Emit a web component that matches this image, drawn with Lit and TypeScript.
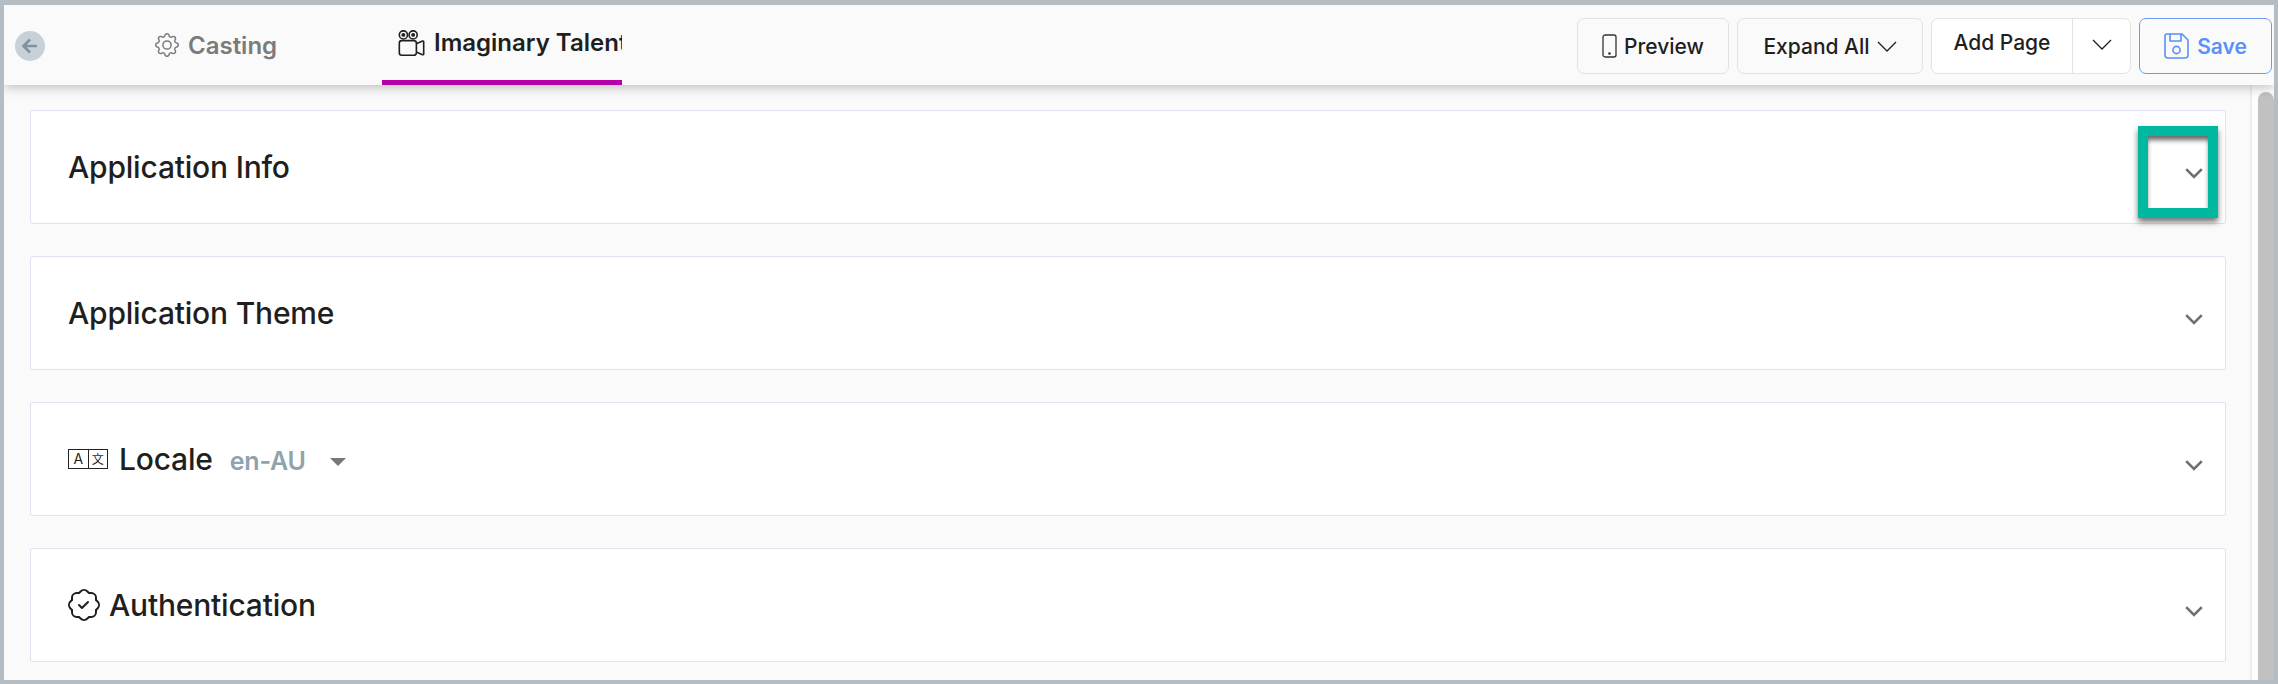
import { LitElement, html, css, svg } from 'lit';
import { customElement } from 'lit/decorators.js';

const gear = svg`<path d="M8 4.754a3.246 3.246 0 1 0 0 6.492 3.246 3.246 0 0 0 0-6.492zM5.754 8a2.246 2.246 0 1 1 4.492 0 2.246 2.246 0 0 1-4.492 0z"/><path d="M9.796 1.343c-.527-1.79-3.065-1.79-3.592 0l-.094.319a.873.873 0 0 1-1.255.52l-.292-.16c-1.64-.892-3.433.902-2.54 2.541l.159.292a.873.873 0 0 1-.52 1.255l-.319.094c-1.79.527-1.79 3.065 0 3.592l.319.094a.873.873 0 0 1 .52 1.255l-.16.292c-.892 1.64.901 3.434 2.541 2.54l.292-.159a.873.873 0 0 1 1.255.52l.094.319c.527 1.79 3.065 1.79 3.592 0l.094-.319a.873.873 0 0 1 1.255-.52l.292.16c1.64.893 3.434-.902 2.54-2.541l-.159-.292a.873.873 0 0 1 .52-1.255l.319-.094c1.79-.527 1.79-3.065 0-3.592l-.319-.094a.873.873 0 0 1-.52-1.255l.16-.292c.893-1.64-.902-3.433-2.541-2.54l-.292.159a.873.873 0 0 1-1.255-.52l-.094-.319zm-2.633.283c.246-.835 1.428-.835 1.674 0l.094.319a1.873 1.873 0 0 0 2.693 1.115l.291-.16c.764-.415 1.6.42 1.184 1.185l-.159.292a1.873 1.873 0 0 0 1.116 2.692l.318.094c.835.246.835 1.428 0 1.674l-.319.094a1.873 1.873 0 0 0-1.115 2.693l.16.291c.415.764-.42 1.6-1.185 1.184l-.291-.159a1.873 1.873 0 0 0-2.693 1.116l-.094.318c-.246.835-1.428.835-1.674 0l-.094-.319a1.873 1.873 0 0 0-2.692-1.115l-.292.16c-.764.415-1.6-.42-1.184-1.185l.159-.291A1.873 1.873 0 0 0 1.945 8.93l-.319-.094c-.835-.246-.835-1.428 0-1.674l.319-.094A1.873 1.873 0 0 0 3.06 4.377l-.16-.292c-.415-.764.42-1.6 1.185-1.184l.292.159a1.873 1.873 0 0 0 2.692-1.115l.094-.319z"/>`;

const reels = svg`<path d="M6 3a3 3 0 1 1-6 0 3 3 0 0 1 6 0zM1 3a2 2 0 1 0 4 0 2 2 0 0 0-4 0z"/><path d="M9 6h.5a2 2 0 0 1 1.983 1.738l3.11-1.382A1 1 0 0 1 16 7.269v7.462a1 1 0 0 1-1.406.913l-3.111-1.382A2 2 0 0 1 9.5 16H2a2 2 0 0 1-2-2V8a2 2 0 0 1 2-2h7zm6 8.73V7.27l-3.5 1.555v4.35l3.5 1.556zM1 8v6a1 1 0 0 0 1 1h7.5a1 1 0 0 0 1-1V8a1 1 0 0 0-1-1H2a1 1 0 0 0-1 1z"/><path d="M9 6a3 3 0 1 0 0-6 3 3 0 0 0 0 6zM7 3a2 2 0 1 1 4 0 2 2 0 0 1-4 0z"/><circle cx="3" cy="3" r="1.2"/><circle cx="9" cy="3" r="1.2"/>`;

const patch = svg`<path fill-rule="evenodd" d="M10.354 6.146a.5.5 0 0 1 0 .708l-3 3a.5.5 0 0 1-.708 0l-1.5-1.5a.5.5 0 1 1 .708-.708L7 8.793l2.646-2.647a.5.5 0 0 1 .708 0z"/><path d="m10.273 2.513-.921-.944.715-.698.622.637.89-.011a2.89 2.89 0 0 1 2.924 2.924l-.01.89.636.622a2.89 2.89 0 0 1 0 4.134l-.637.622.011.89a2.89 2.89 0 0 1-2.924 2.924l-.89-.01-.622.636a2.89 2.89 0 0 1-4.134 0l-.622-.637-.89.011a2.89 2.89 0 0 1-2.924-2.924l.01-.89-.636-.622a2.89 2.89 0 0 1 0-4.134l.637-.622-.011-.89a2.89 2.89 0 0 1 2.924-2.924l.89.01.622-.636a2.89 2.89 0 0 1 4.134 0l-.715.698a1.89 1.89 0 0 0-2.704 0l-.92.944-1.32-.016a1.89 1.89 0 0 0-1.911 1.912l.016 1.318-.944.921a1.89 1.89 0 0 0 0 2.704l.944.92-.016 1.32a1.89 1.89 0 0 0 1.912 1.911l1.318-.016.921.944a1.89 1.89 0 0 0 2.704 0l.92-.944 1.32.016a1.89 1.89 0 0 0 1.911-1.912l-.016-1.318.944-.921a1.89 1.89 0 0 0 0-2.704l-.944-.92.016-1.32a1.89 1.89 0 0 0-1.912-1.911l-1.318.016z"/>`;

const thinChevron = html`<svg class="thin" viewBox="0 0 20 11" fill="none" stroke="currentColor" stroke-width="1.3"><path d="M1 1l9 9 9-9"/></svg>`;
const cardChevron = html`<svg class="chev" viewBox="0 0 18 11" fill="none" stroke="#6f6f6f" stroke-width="2.6"><path d="M1.2 1.2L9 9l7.8-7.8"/></svg>`;

@customElement('app-root')
export class AppRoot extends LitElement {
  static styles = css`
    :host {
      display: block;
      width: 2278px;
      height: 684px;
      box-sizing: border-box;
      border: 4px solid #b4bdc4;
      border-top-width: 5px;
      background: #fafafa;
      font-family: Inter, "Liberation Sans", sans-serif;
      color: #1f1f1f;
      overflow: hidden;
    }
    svg { display: block; flex: none; }
    .top {
      position: relative;
      z-index: 2;
      height: 80px;
      display: flex;
      align-items: flex-start;
      background: #fafafa;
      box-shadow: 0 3px 10px rgba(0, 0, 0, .22);
    }
    .back {
      width: 30px;
      height: 30px;
      margin: 26px 0 0 11px;
      border-radius: 50%;
      background: #c8d1d8;
      display: flex;
      align-items: center;
      justify-content: center;
      flex: none;
    }
    .tab {
      height: 80px;
      box-sizing: border-box;
      display: flex;
      align-items: center;
      gap: 9px;
      padding-top: 20px;
      padding-bottom: 20px;
      font-size: 24px;
      font-weight: 600;
      white-space: nowrap;
      overflow: hidden;
      flex: none;
    }
    .tab.casting { margin-left: 110px; width: 227px; color: #7b7b7b; }
    .tab.active {
      width: 240px;
      padding-left: 16px;
      border-bottom: 5px solid #b800a8;
      border-radius: 0 0 0 0;
      position: relative;
    }
    .bar {
      position: absolute;
      left: 0;
      right: 0;
      bottom: -5px;
      height: 5px;
      background: #b800a8;
      border-radius: 5px 5px 0 0;
    }
    .actions {
      margin-left: auto;
      display: flex;
      gap: 8px;
      padding: 13px 2px 0 0;
    }
    .btn {
      height: 56px;
      box-sizing: border-box;
      border: 1px solid #e2e2e2;
      border-radius: 7px;
      display: flex;
      align-items: center;
      justify-content: center;
      gap: 7px;
      font-size: 21px;
      font-weight: 500;
      white-space: nowrap;
    }
    .preview { width: 152px; }
    .expand { width: 186px; }
    .split { width: 200px; background: #fff; justify-content: flex-start; gap: 0; }
    .split .label { width: 140px; text-align: center; padding-bottom: 7px; }
    .split .caret {
      flex: 1;
      align-self: stretch;
      border-left: 1px solid #e2e2e2;
      display: flex;
      align-items: center;
      justify-content: center;
      padding-bottom: 4px;
    }
    .save { width: 133px; color: #5b8ff9; border-color: #6b9af5; font-weight: 600; gap: 8px; }
    .thin { width: 20px; height: 11px; }
    .body { flex: 1; display: flex; height: 595px; }
    .main {
      flex: none;
      width: 2246px;
      box-sizing: border-box;
      padding: 25px 24px 0 26px;
      display: flex;
      flex-direction: column;
      gap: 32px;
    }
    .card {
      position: relative;
      height: 114px;
      box-sizing: border-box;
      background: #fff;
      border: 1px solid #dfe3f0;
      border-radius: 2px;
      display: flex;
      align-items: center;
      padding: 0 22px 0 37px;
    }
    .title {
      display: flex;
      align-items: center;
      font-size: 30px;
      font-weight: 500;
      letter-spacing: -.2px;
      padding-bottom: 1px;
    }
    .chev { width: 18px; height: 11px; margin: 12px 0 0 auto; }
    .locale { margin: 5px 0 0 17px; color: #8fa3ad; font-size: 25px; font-weight: 600; }
    .drop {
      width: 0;
      height: 0;
      margin: 6px 0 0 24px;
      border: 8px solid transparent;
      border-top-color: #777;
      border-bottom-width: 0;
    }
    .lang {
      display: flex;
      width: 40px;
      height: 20px;
      box-sizing: border-box;
      border: 1.5px solid #222;
      margin-right: 11px;
      font-size: 14px;
      font-weight: 400;
      line-height: 17px;
      text-align: center;
      letter-spacing: 0;
    }
    .lang span { flex: 1; }
    .lang span + span {
      border-left: 1.5px solid #222;
      font-family: "Noto Sans CJK SC", sans-serif;
      font-size: 12px;
    }
    .mark {
      position: absolute;
      top: 15px;
      right: 7px;
      width: 80px;
      height: 92px;
      box-sizing: border-box;
      border: solid #00b89f;
      border-width: 10px;
      box-shadow: 0 4px 6px rgba(0, 0, 0, .55), inset 0 5px 5px -1px rgba(0, 0, 0, .6);
      pointer-events: none;
    }
    .rail {
      flex: 1;
      border-left: 2px solid #ececec;
      background: #fdfdfd;
      padding: 7px 0 0 6px;
      display: flex;
    }
    .thumb {
      width: 16px;
      flex: none;
      background: #c1c1c1;
      border-radius: 8px 8px 0 0;
    }
  `;

  render() {
    return html`
      <div class="top">
        <div class="back">
          <svg width="18" height="18" viewBox="0 0 18 18" fill="none" stroke="#7f929e" stroke-width="2.6"><path d="M16 9H3M9 2.5L2.5 9 9 15.5"/></svg>
        </div>
        <div class="tab casting">
          <svg width="24" height="24" viewBox="0 0 16 16" fill="#7b7b7b">${gear}</svg>
          <span>Casting</span>
        </div>
        <div class="tab active">
          <svg width="27" height="26" viewBox="0 0 16 16" fill="#1f1f1f">${reels}</svg>
          <span>Imaginary Talent</span>
        </div>
        <div class="actions">
          <div class="btn preview">
            <svg width="15" height="24" viewBox="0 0 15 24" fill="none" stroke="#333" stroke-width="1.3"><rect x="1" y="1" width="13" height="22" rx="2"/><circle cx="7.5" cy="19.5" r=".7" fill="#333"/></svg>
            <span>Preview</span>
          </div>
          <div class="btn expand"><span>Expand All</span>${thinChevron}</div>
          <div class="btn split">
            <span class="label">Add Page</span>
            <span class="caret">${thinChevron}</span>
          </div>
          <div class="btn save">
            <svg width="25" height="26" viewBox="0 0 25 26" fill="none" stroke="#5b8ff9" stroke-width="1.6"><path d="M3 1h15l6 6v15a3 3 0 0 1-3 3H4a3 3 0 0 1-3-3V3a2 2 0 0 1 2-2z"/><path d="M6 1v7h11V1"/><circle cx="12.5" cy="17" r="3.6"/></svg>
            <span>Save</span>
          </div>
        </div>
      </div>
      <div class="body">
        <div class="main">
          <div class="card">
            <div class="title">Application Info</div>
            ${cardChevron}
            <div class="mark"></div>
          </div>
          <div class="card">
            <div class="title">Application Theme</div>
            ${cardChevron}
          </div>
          <div class="card">
            <div class="title">
              <div class="lang"><span>A</span><span>文</span></div>
              Locale
              <span class="locale">en-AU</span>
              <span class="drop"></span>
            </div>
            ${cardChevron}
          </div>
          <div class="card">
            <div class="title">
              <svg width="32" height="32" viewBox="0 0 16 16" fill="#1f1f1f" style="margin-right:9px">${patch}</svg>
              Authentication
            </div>
            ${cardChevron}
          </div>
        </div>
        <div class="rail"><div class="thumb"></div></div>
      </div>
    `;
  }
}
